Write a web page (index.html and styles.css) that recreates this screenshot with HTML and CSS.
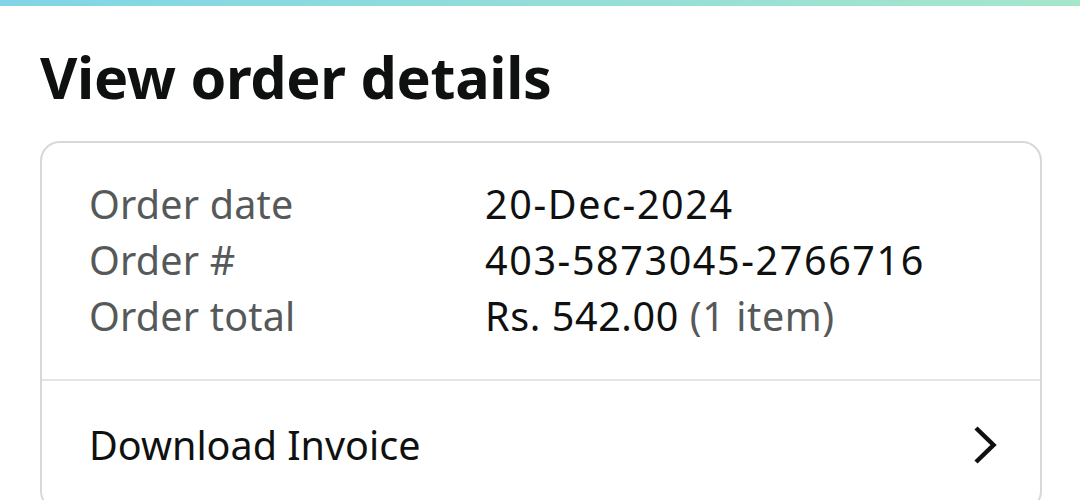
FILE: index.html
```html
<!DOCTYPE html>
<html lang="en">
<head>
    <meta charset="UTF-8">
    <meta name="viewport" content="width=device-width, initial-scale=1.0">
    <title>View order details</title>
    <link rel="stylesheet" href="styles.css">
</head>
<body>
    <div class="top-bar"></div>
    <div class="page">
        <h1 class="title">View order details</h1>
        <div class="card">
            <div class="summary">
                <div class="row">
                    <span class="label">Order date</span>
                    <span class="value num">20-Dec-2024</span>
                </div>
                <div class="row">
                    <span class="label">Order #</span>
                    <span class="value num">403-5873045-2766716</span>
                </div>
                <div class="row">
                    <span class="label">Order total</span>
                    <span class="value">Rs. 542.00 <span class="muted">(1 item)</span></span>
                </div>
            </div>
            <a class="link-row" href="#">
                <span>Download Invoice</span>
                <svg class="chevron" width="30" height="40" viewBox="0 0 30 40">
                    <path d="M5 3 L22.5 20 L5 37" fill="none" stroke="#0f1111" stroke-width="4.5"/>
                </svg>
            </a>
        </div>
    </div>
</body>
</html>
```

FILE: styles.css
```css
body {
    margin: 0;
    font-family: "Noto Sans", Arial, sans-serif;
    background: #ffffff;
    color: #0f1111;
}
.top-bar {
    height: 6px;
    background: linear-gradient(90deg, #80d5e6, #a6e6cb);
}
.page {
    padding: 0 38px 0 40px;
}
.title {
    margin: 0;
    padding-top: 43px;
    height: 135px;
    box-sizing: border-box;
    font-size: 57.5px;
    line-height: 1;
    font-weight: 700;
    letter-spacing: -0.3px;
}
.card {
    border: 2px solid #d5d9d9;
    border-radius: 20px;
    overflow: hidden;
}
.summary {
    padding: 33px 0 35px 47px;
    border-bottom: 2px solid #e3e6e6;
}
.row {
    display: flex;
    font-size: 39.5px;
    line-height: 56px;
}
.label {
    width: 396px;
    color: #565959;
    letter-spacing: 0.2px;
}
.value {
    color: #0f1111;
    letter-spacing: 0.6px;
}
.value.num {
    letter-spacing: 1.6px;
}
.muted {
    color: #565959;
}
.link-row {
    display: flex;
    align-items: center;
    justify-content: space-between;
    height: 128px;
    padding: 0 39px 0 47px;
    font-size: 39.5px;
    color: #0f1111;
    text-decoration: none;
}
.chevron {
    display: block;
}
```
